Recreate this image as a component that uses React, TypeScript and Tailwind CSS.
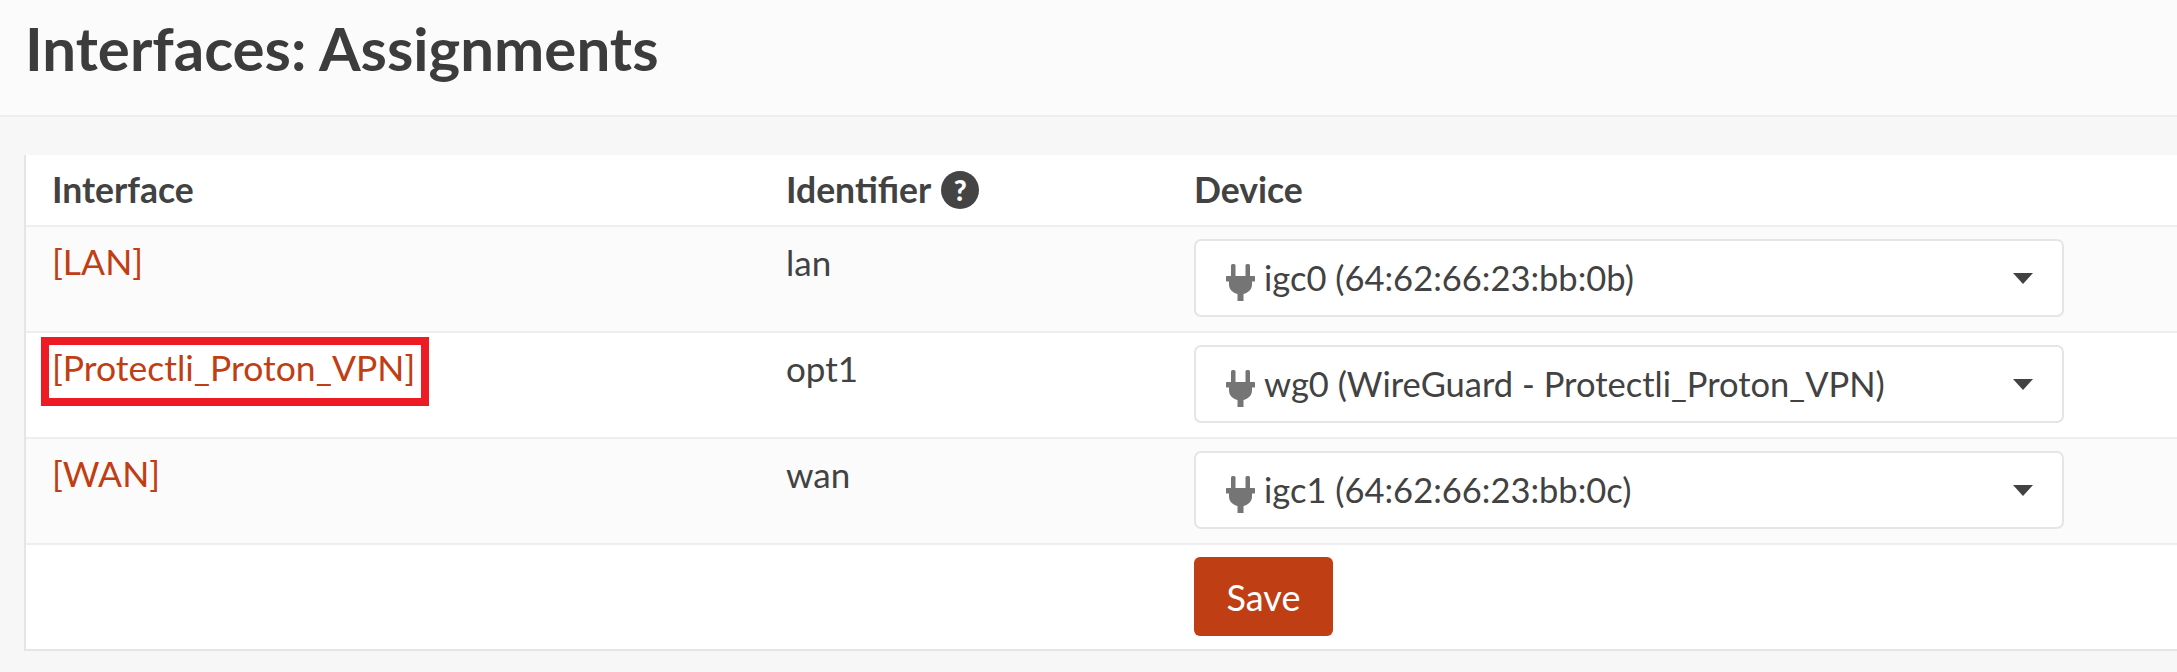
const rows = [
  { name: "[LAN]", id: "lan", device: "igc0 (64:62:66:23:bb:0b)", striped: true },
  { name: "[Protectli_Proton_VPN]", id: "opt1", device: "wg0 (WireGuard - Protectli_Proton_VPN)", striped: false, marked: true },
  { name: "[WAN]", id: "wan", device: "igc1 (64:62:66:23:bb:0c)", striped: true },
];

const PlugIcon = () => (
  <svg viewBox="0 0 29 37" className="w-[29px] h-[37px] shrink-0 mt-[9px]" fill="#757575">
    <rect x="5" y="0" width="4.500" height="13" rx="1.500" />
    <rect x="19.500" y="0" width="4.500" height="13" rx="1.500" />
    <path d="M1.500 12h26a1.500 1.500 0 0 1 0 5.500H26v3c0 5-4 8.500-8.500 9.500V37h-6v-7c-4.500-1-8.500-4.500-8.500-9.500v-3H1.500a1.500 1.500 0 0 1 0-5.500z" />
  </svg>
);

const HelpIcon = () => (
  <span className="ml-[10px] w-[38px] h-[38px] rounded-full bg-[#444444] text-white flex items-center justify-center text-[28px] font-black leading-none">
    ?
  </span>
);

const Row = ({ name, id, device, striped, marked }: { name: string; id: string; device: string; striped: boolean; marked?: boolean }) => (
  <div className={`grid grid-cols-[733px_407px_1fr] h-[106px] border-b-2 border-[#eeeeee] ${striped ? "bg-[#fbfbfb]" : "bg-white"}`}>
    <div className="pl-[26px] pt-[12px] relative">
      <span className="text-[#c03e14] text-[35.500px] leading-[46px]">{name}</span>
      {marked && <div className="absolute left-[15px] top-[4px] w-[388px] h-[69px] border-[8px] border-[#ed1c24]" />}
    </div>
    <div className="pl-[27px] pt-[12px] text-[35px] leading-[46px] text-[#424242]">{id}</div>
    <div className="pl-[28px] pt-[12px]">
      <div className="w-[870px] h-[78px] bg-white border-2 border-[#e5e5e5] rounded-[7px] flex items-center pl-[30px] pr-[29px] gap-[9px]">
        <PlugIcon />
        <span className="text-[34.500px] text-[#424242] flex-1">{device}</span>
        <span className="w-0 h-0 border-l-[10px] border-r-[10px] border-t-[11px] border-l-transparent border-r-transparent border-t-[#424242]" />
      </div>
    </div>
  </div>
);

export default function App() {
  return (
    <div className="w-[2177px] h-[672px] overflow-hidden bg-[#f7f7f7] font-['Lato','Noto_Sans',sans-serif]">
      <header className="h-[117px] bg-[#fbfbfb] border-b-2 border-[#eeeeee] pl-[25px] flex items-center pb-[19px]">
        <h1 className="text-[60px] font-bold text-[#3c3c3c] leading-none">Interfaces: Assignments</h1>
      </header>
      <main className="pt-[38px] pl-[24px]">
        <div className="bg-white border-l-2 border-b-2 border-[#e5e5e5]">
          <div className="grid grid-cols-[733px_407px_1fr] h-[72px] items-center border-b-2 border-[#eeeeee] text-[35.500px] font-bold text-[#424242]">
            <div className="pl-[26px]">Interface</div>
            <div className="pl-[27px] flex items-center">Identifier<HelpIcon /></div>
            <div className="pl-[28px]">Device</div>
          </div>
          {rows.map((row) => (
            <Row key={row.id} {...row} />
          ))}
          <div className="h-[104px] pl-[1168px] pt-[12px]">
            <button className="w-[139px] h-[79px] bg-[#c03e14] text-white text-[36px] rounded-[6px]">Save</button>
          </div>
        </div>
      </main>
    </div>
  );
}
